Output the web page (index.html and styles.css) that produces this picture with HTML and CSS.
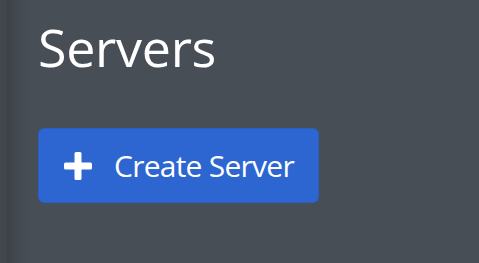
FILE: index.html
```html
<!DOCTYPE html>
<html>
	<head>
		<meta charset="UTF-8">
		<title>Servers</title>
		<link rel="stylesheet" href="styles.css">
	</head>
	<body>
		<div class="page">
			<div class="side"></div>
			<div class="main">
				<h1 class="title">Servers</h1>
				<div class="actions">
					<button class="btn_create" type="button">
						<svg class="icon_plus" width="28" height="28" viewBox="0 0 28 28">
							<rect x="10.5" y="0" width="7" height="28" rx="1.5" fill="#fff" />
							<rect x="0" y="10.5" width="28" height="7" rx="1.5" fill="#fff" />
						</svg>
						<span>Create Server</span>
					</button>
				</div>
			</div>
		</div>
	</body>
</html>
```

FILE: styles.css
```css
html,body,div,h1{margin: 0; padding: 0;}
body{
	background: #484e56;
	font-family: "Open Sans", "Liberation Sans", sans-serif;
	color: #fff;
}
.page{
	display: flex;
	min-height: 263px;
}
.side{
	width: 7px;
	background: #42474e;
	flex-shrink: 0;
}
.main{
	flex: 1;
	padding: 16px 0 0 31px;
	background: linear-gradient(to right, #3c4047 0, #444950 10px, #484e56 22px);
}
.title{
	font-size: 52px;
	font-weight: 400;
	line-height: 1.2;
	letter-spacing: -0.3px;
}
.actions{
	margin-top: 50px;
}
.btn_create{
	display: inline-flex;
	align-items: center;
	gap: 22px;
	height: 75px;
	padding: 0 24px 0 25px;
	background: #2d66d0;
	border: 1px solid #2a5fc2;
	border-radius: 6px;
	color: #fff;
	font-family: "Open Sans", "Liberation Sans", sans-serif;
	font-size: 30px;
	letter-spacing: -0.75px;
	cursor: pointer;
}
.icon_plus{
	display: block;
	flex-shrink: 0;
}
```
